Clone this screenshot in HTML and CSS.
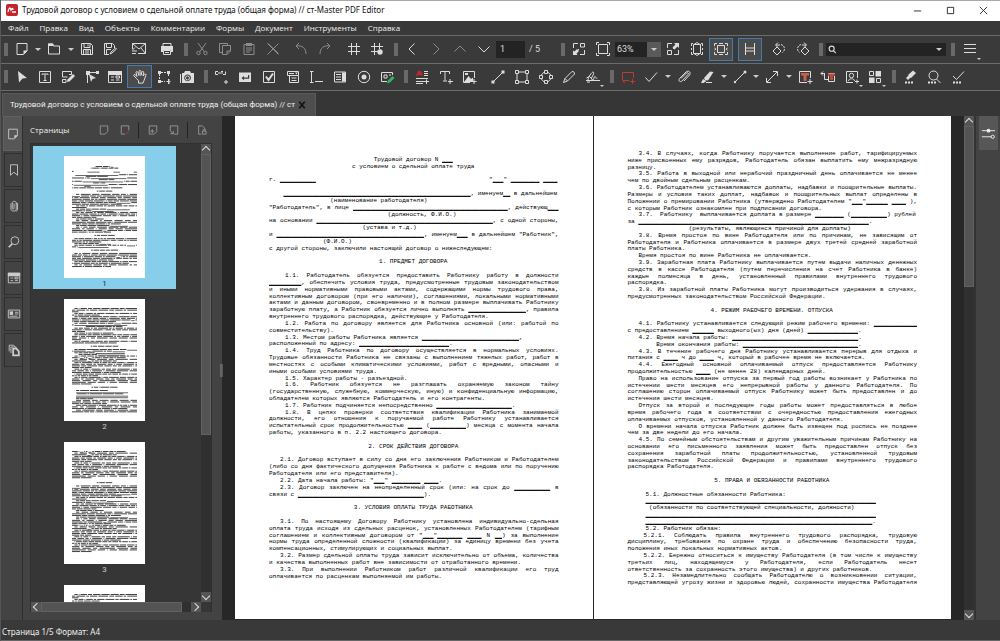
FILE: index.html
```html
<!DOCTYPE html>
<html lang="ru">
<head>
<meta charset="utf-8">
<title>Трудовой договор с условием о сдельной оплате труда (общая форма) // ст-Master PDF Editor</title>
<link rel="stylesheet" href="styles.css">
</head>
<body>
<svg class="sprite" aria-hidden="true">
<symbol id="page" viewBox="0 0 16 16"><path d="M3 2.500h10v7.500l-3.500 3.500H3z" class="w"/><path d="M13 9.500v.5l-3.500 3.500v-4z" class="f"/></symbol>
<symbol id="folder" viewBox="0 0 16 16"><path d="M2.500 13V3h4l1 2h6v8z" class="w"/><path d="M2 2.500h5l1 2.500H2z" class="f"/></symbol>
<symbol id="save" viewBox="0 0 16 16"><path d="M2.500 2.500h9l2 2v9h-11zM5 2.500v4h6v-4M4.500 13.500v-5h7v5M6 10h4M6 12h4M9 3.500v2" class="w"/></symbol>
<symbol id="saveas" viewBox="0 0 16 16"><path d="M7 13.500H2.500v-11h8l2 2V7M4.500 2.500v4h5v-4M4.500 13V8.500H9M8 13l1-2 4.500-4 1 1-4.500 4z" class="w"/></symbol>
<symbol id="mail" viewBox="0 0 16 16"><path d="M1.500 8V2.500h13v10H7M1.500 2.500L8 8l6.500-5.500M14.500 12.500L10 7M1 10h5M1 12.500h4M4 6.500L1.500 9" class="w"/></symbol>
<symbol id="print" viewBox="0 0 16 16"><path d="M4 5V2.500h8V5M4.500 9.500h7v4h-7zM6 11.500h4" class="w"/><path d="M2 5h12v6h-2V9H4v2H2z" class="f"/></symbol>
<symbol id="cut" viewBox="0 0 16 16"><path d="M4 2l6.500 9M12 2L5.500 11" class="w"/><circle cx="4.500" cy="12" r="1.700" class="w"/><circle cx="11.500" cy="12" r="1.700" class="w"/></symbol>
<symbol id="copy" viewBox="0 0 16 16"><path d="M5 11.500H2.500v-9h8V4M5.500 4.500h8V10L10 13.500H5.500zM13.500 10H10v3.500" class="w"/></symbol>
<symbol id="paste" viewBox="0 0 16 16"><path d="M3 3.500h10v10H3zM5 7h6M5 9h6M5 11h4" class="w"/><path d="M5 2h6v3H5z" class="f"/></symbol>
<symbol id="x" viewBox="0 0 16 16"><path d="M2.500 2.500l11 11M13.500 2.500l-11 11" class="w"/><path d="M3 2.500l10.500 10" class="w"/></symbol>
<symbol id="undo" viewBox="0 0 16 16"><path d="M6 2L3 5l3 3M3 5c6-1 10 2 10 8" class="w"/></symbol>
<symbol id="redo" viewBox="0 0 16 16"><path d="M10 2l3 3-3 3M13 5C7 4 3 7 3 13" class="w"/></symbol>
<symbol id="grid" viewBox="0 0 16 16"><path d="M5.500 2v12M10.500 2v12M2 5.500h12M2 10.500h12" class="w"/></symbol>
<symbol id="gridsnap" viewBox="0 0 16 16"><path d="M5.500 2v12M10.500 2v6M2 5.500h12M2 10.500h7" class="w"/><circle cx="11" cy="11" r="2.700" class="f"/></symbol>
<symbol id="left" viewBox="0 0 16 16"><path d="M10.500 2.500L5 8l5.500 5.500" class="w"/></symbol>
<symbol id="right" viewBox="0 0 16 16"><path d="M5.500 2.500L11 8l-5.500 5.500" class="w"/></symbol>
<symbol id="up" viewBox="0 0 16 16"><path d="M2.500 10.500L8 5l5.500 5.500" class="w"/></symbol>
<symbol id="down" viewBox="0 0 16 16"><path d="M2.500 5.500L8 11l5.500-5.500" class="w"/></symbol>
<symbol id="fit1" viewBox="0 0 16 16"><path d="M2.500 7V2.500H7M9.500 2.500h4V6h-4zM9 13.500h4.500V9M8 8l-4 4" class="w"/><path d="M2 14V9.500l1.500 1L6 8l2 2-2.500 2.500 1 1.500z" class="f"/></symbol>
<symbol id="fit2" viewBox="0 0 16 16"><path d="M3.500 3.500h9v9h-9zM1.500 4V1.500H4M12 1.500h2.500V4M1.500 12v2.500H4M12 14.500h2.500V12" class="w"/></symbol>
<symbol id="fit3" viewBox="0 0 16 16"><path d="M7 2.500H2.500V7M2.500 9.500h4v4h-4zM9 13.500h4.500V9M8 8l4-4" class="w"/><path d="M14 2v5l-1.500-1.500L9.500 8.500 7.500 6.500l3-3L9 2z" class="f"/></symbol>
<symbol id="fitp" viewBox="0 0 16 16"><path d="M4.500 3.500h7v9h-7zM5 3.500L8 1.500l3 2M5 12.500l3 2 3-2M2.500 5V2.500H4M12 2.500h1.500V5M2.500 11v2.500H4M12 13.500h1.500V11M2.500 7v2M13.500 7v2" class="w"/></symbol>
<symbol id="fitw" viewBox="0 0 16 16"><path d="M4.500 4.500h7v7h-7zM1.500 5V2.500H4M12 2.500h2.500V5M1.500 11v2.500H4M12 13.500h2.500V11M6 2.500h4M6 13.500h4M1.500 7l1.500 1-1.500 1M14.500 7L13 8l1.500 1" class="w"/></symbol>
<symbol id="facing" viewBox="0 0 16 16"><path d="M3.500 2v12M12.500 2v12M3.500 7h9M3.500 10h9" class="w"/></symbol>
<symbol id="rotl" viewBox="0 0 16 16"><path d="M6 6l4 4-4 4-4-4zM5 4h4M7 1.500L4.500 4 7 6.500" class="w"/><path d="M10 3.500c4 1 4.500 6 1.500 8" class="w d"/></symbol>
<symbol id="rotr" viewBox="0 0 16 16"><path d="M10 6l4 4-4 4-4-4zM11 4H7M9 1.500L11.500 4 9 6.500" class="w"/><path d="M6 3.500c-4 1-4.500 6-1.500 8" class="w d"/></symbol>
<symbol id="more" viewBox="0 0 16 16"><path d="M2 3.500h12M2 7.500h12M2 11.500h12" class="w"/></symbol>
<symbol id="search" viewBox="0 0 16 16"><circle cx="9" cy="6.500" r="4.500" class="w"/><path d="M6 10l-4 4" class="w k"/></symbol>
<symbol id="find" viewBox="0 0 16 16"><circle cx="6.500" cy="6.500" r="4.500" class="w k"/><path d="M9.500 10l4.500 4.500" class="w k"/></symbol>
<symbol id="arrow" viewBox="0 0 16 16"><path d="M4 2l9 7-4.500.5L5 13.500z" class="f"/></symbol>
<symbol id="tbox" viewBox="0 0 16 16"><path d="M2.500 2.500h11v11h-11zM5 6V5h6v1M8 5v6M6.500 11.500h3" class="w"/></symbol>
<symbol id="editf" viewBox="0 0 16 16"><path d="M9 5.500h2.500v-3h-9V6M2.500 2.500V8h5M2.500 10.500H6v3H2.500z" class="w"/><path d="M7 13l.5-2.500L13 5l2 2-5.500 5.500z" class="f"/></symbol>
<symbol id="editp" viewBox="0 0 16 16"><path d="M3.500 14V3.500H14" class="w"/><path d="M2 2h4v4H2zM12 2h3v3h-3zM5 5l7 4-3.500 1L7 13z" class="f"/></symbol>
<symbol id="form" viewBox="0 0 16 16"><path d="M1.500 2.500h13v11h-13zM4 8h3M4 11h3M9 7h3.500v2H9zM9 11h3.500" class="w"/><path d="M1 2h14v4H1z" class="f"/></symbol>
<symbol id="hand" viewBox="0 0 16 16"><path d="M4.500 9.500L2 7c-.8-1 .3-2 1.200-1.200L5 7.500 4 3.500c0-1.200 1.400-1.300 1.800-.2L7 6.500V2.300c0-1.200 1.800-1.200 1.900 0V6.500l1-3.500c.4-1.100 1.900-.7 1.800.4L11 7l1.300-1.700c.7-.9 2-.2 1.600.8l-1.700 5-1.200 3H6.500v-2.500z" class="w"/></symbol>
<symbol id="marq" viewBox="0 0 16 16"><path d="M3.500 5v6M5 3.500h6M12.500 5v3M5 12.500h4M10.500 12.500h4M12.500 10.500v4" class="w d"/><path d="M2 2h3v3H2zM11 2h3v3h-3zM2 11h3v3H2zM12 10h1.500v5H12z" class="f"/></symbol>
<symbol id="cam" viewBox="0 0 16 16"><path fill-rule="evenodd" d="M1 5h1v9H1zM3 4h2l1-2h5l1 2h3v10H3zM8.500 5.500a3.400 3.400 0 1 0 .1 0z" class="f"/><circle cx="8.500" cy="9" r="2" class="w"/></symbol>
<symbol id="link" viewBox="0 0 16 16"><path d="M4 2.500H1.500v3H4M7 2.500h2M4 4h5M9 5.500h2.500v-3M12 11v4M10 13h4" class="w"/></symbol>
<symbol id="btn" viewBox="0 0 16 16"><path fill-rule="evenodd" d="M2 3.500h12v9.500H2zM11 6v2.500H7V7L4.500 9 7 11.300V9.700h5.200V6z" class="f"/></symbol>
<symbol id="chk" viewBox="0 0 16 16"><path d="M2.500 2.500h11v11h-11z" class="w"/><path d="M5 7.500L7.500 11 12 4.500" class="w k"/></symbol>
<symbol id="combo" viewBox="0 0 16 16"><path d="M2.500 2.500h11v4h-11zM4.500 6.500v7h9v-7M6.500 9h5M6.500 11.500h5M4 4.500h5" class="w"/><path d="M10 3.500h3l-1.500 2z" class="f"/></symbol>
<symbol id="tf" viewBox="0 0 16 16"><path d="M2 2.500h3.500M3.500 2.500v11M2 13.500h3.500M7 12.500h8" class="w"/></symbol>
<symbol id="list" viewBox="0 0 16 16"><path d="M2.500 3h11v10h-11zM4 5.500h5M4 8h5M4 10.500h5" class="w"/><path d="M10 3.500h3.500v9H10z" class="f"/></symbol>
<symbol id="card" viewBox="0 0 16 16"><path d="M1.500 3.500h13v9h-13zM9 6h4M9 8h4M3 10.500h9" class="w"/><path d="M3 5h4v4H3z" class="f"/></symbol>
<symbol id="radio" viewBox="0 0 16 16"><circle cx="8" cy="8" r="5.700" class="w"/><circle cx="8" cy="8" r="2.500" class="f"/></symbol>
<symbol id="sign" viewBox="0 0 16 16"><path d="M8 12.500H2.500v-9h11V6M5 6h3v3H5zM10 6h2" class="w"/><path d="M8 14.500l1-3 4.500-4.500 2 2-4.500 4.500z" fill="#35b36a"/></symbol>
<symbol id="edtext" viewBox="0 0 16 16"><path d="M2 7l2-5h3l2 5H7.500L7 6H4l-.5 1z" fill="#c2272d"/><path d="M10 2.500h4M10 4.500h4M10 6.500h4M2 9.500h12M2 12.500h8M2 14.500h7M10 12.500h5M12.500 10.500V15" class="w"/></symbol>
<symbol id="addt" viewBox="0 0 16 16"><path d="M2.500 5V2.500h9V5M7 2.500v9M5 12h4M12 10v5M10 12.500h5" class="w"/></symbol>
<symbol id="img" viewBox="0 0 16 16"><path d="M9 13.500H2.500v-11h11V9M10.500 12.500h5M13 10v5" class="w"/><path d="M3 13L7.500 7l2.500 3 2-1.500V13zM4 4h3v2H4z" class="f"/></symbol>
<symbol id="line" viewBox="0 0 16 16"><path d="M3.500 12.500l9-9" class="w"/><path d="M1.500 11.500h3v3h-3zM11.500 1.500h3v3h-3z" class="f"/></symbol>
<symbol id="rect" viewBox="0 0 16 16"><path d="M3 3h10v10H3z" class="w"/><path d="M1.500 1.500h3v3h-3zM11.500 1.500h3v3h-3zM1.500 11.500h3v3h-3zM11.500 11.500h3v3h-3z" class="n"/></symbol>
<symbol id="circ" viewBox="0 0 16 16"><circle cx="8" cy="8" r="5" class="w"/><path d="M6.500 1.500h3v3h-3zM6.500 11.500h3v3h-3zM1.500 6.500h3v3h-3zM11.500 6.500h3v3h-3z" class="n"/></symbol>
<symbol id="pen" viewBox="0 0 16 16"><path d="M2.500 13.500L4 9.500 11 2.500c2 0 2.500 1 2.500 2.500L6.500 12zM4 9.500L6.500 12" class="w"/></symbol>
<symbol id="ink" viewBox="0 0 16 16"><path d="M1 11.500h14M3 11c0-3 4-8 5-8s1 2-1 5 2 4 2 1 3 0 3 1M1.500 9l3-1.500 3 3M2 13h3" class="w"/></symbol>
<symbol id="cloud" viewBox="0 0 16 16"><path d="M4 11.500H2.500v-8h11V9M4 11v3M4 11.500h5M10 12.500h5M12.500 10v5" stroke="#c03a30" fill="none"/></symbol>
<symbol id="check" viewBox="0 0 16 16"><path d="M2.500 8.500l3.500 4 8-9" class="w"/></symbol>
<symbol id="clip" viewBox="0 0 16 16"><path d="M5 9.500l5.500-5.500c1.200-1 2.500.3 1.500 1.500l-6 6.500c-2 1.700-4-.3-2.500-2.500L10 3c2.500-2.200 5.500.5 3.500 3L8 12" class="w"/></symbol>
<symbol id="hl" viewBox="0 0 16 16"><path d="M5 9l6-6.500L14.500 3 9 11.500 6 11z" class="f"/><path d="M4 10l3.500 2-3 2H2z" class="f"/><path d="M7 13.500h6" class="w"/></symbol>
<symbol id="dline" viewBox="0 0 16 16"><path d="M3 13L13 3" class="w"/><circle cx="3" cy="13" r="1.200" class="f"/><circle cx="13" cy="3" r="1.500" class="f"/></symbol>
<symbol id="darrow" viewBox="0 0 16 16"><path d="M3 13L13 3M9 2.500h4.500V7M2.500 9v4.500H7" class="w"/></symbol>
<symbol id="ort" viewBox="0 0 16 16"><path d="M10 13.500H2.500v-11h11V9M10.500 12.500h5M13 10v5" class="w"/><path d="M4 4h8v2.500H9.500V12h-3V6.500H4z" fill="#c8604a"/></symbol>
<symbol id="callt" viewBox="0 0 16 16"><path d="M1 4.500h4M4.500 4.500v6H8M3 2.500L1 4.500l2 2M8.500 4.500h6v8h-6z" class="w"/><path d="M8 4.500h7V7h-2v4h-3V7H8z" fill="#b84a38"/></symbol>
<symbol id="stamp" viewBox="0 0 16 16"><path d="M9 13.500H2.500v-11h11V9M4.500 12c0-3 6-3 6 0M11 12.500h4M13 10.500v4" class="w"/><circle cx="7.500" cy="6.500" r="2.200" class="w"/></symbol>
<symbol id="tiles" viewBox="0 0 16 16"><path d="M2.500 2.500h4v4h-4zM9.500 9.500h4v4h-4z" class="w"/><path d="M8.500 2h5.500v5.500H8.500zM2 8.500h5.500V14H2z" class="f"/></symbol>
<symbol id="hlred" viewBox="0 0 16 16"><path d="M6 6l5-4.500L14 4l-5 5zM4 9l2.500-2.500 2 2L6 11z" class="f"/><path d="M3 13.500h9" class="w k d"/></symbol>
<symbol id="sred" viewBox="0 0 16 16"><circle cx="7.500" cy="6.500" r="4.500" class="w"/><path d="M10.500 10l4 4" class="w"/><path d="M2 13.500h8" class="w k d"/></symbol>
<symbol id="cred" viewBox="0 0 16 16"><path d="M3 7l3.500 3.500L14 2.500" class="w"/><path d="M3 13.500h8" class="w k d"/></symbol>
<symbol id="bmk" viewBox="0 0 16 16"><path d="M4 2h8v12l-4-3.500L4 14z" class="w"/></symbol>
<symbol id="vclip" viewBox="0 0 16 16"><path d="M8 5v5.500c0 1.300-2 1.300-2 0v-6c0-2.500 4.500-2.500 4.500 0v7c0 3-6 3-6 0V5M10.500 5h1.500v6.500c0 1.500-1 2.500-2 2.500" class="w"/></symbol>
<symbol id="layers" viewBox="0 0 16 16"><path d="M2.500 9.500v-7h5l3 3M4.500 11.500v-7h5l3 3" class="w"/><path d="M7 6.500h3.500l3 3V14H7z" class="w k"/></symbol>
<symbol id="slid" viewBox="0 0 16 16"><path d="M1 5h14M1 11.500h10" class="w"/><circle cx="8" cy="5" r="2" class="f"/><circle cx="12.500" cy="11.500" r="1.700" class="w"/></symbol>
<symbol id="pg" viewBox="0 0 16 16"><path d="M3 2.500h10v7.500l-3.500 3.500H3z" class="w"/></symbol>
<symbol id="pgdel" viewBox="0 0 16 16"><path d="M3 2.500h10v6M8 13.500H3v-11" class="w"/><path d="M9 10l4 4M13 10l-4 4" stroke="#a33a3a"/></symbol>
<symbol id="pgout" viewBox="0 0 16 16"><path d="M3 2.500h10v7.500l-3.500 3.500H3z" class="w"/><path d="M7 7v5M4.500 9.500h5" class="w"/></symbol>
<symbol id="pgin" viewBox="0 0 16 16"><path d="M3 9V2.500h10v11H8M3 9l4 4M7 9v4H3" class="w"/></symbol>
<symbol id="lock" viewBox="0 0 16 16"><path d="M7 13.500H3.500v-11h5l3 3V7M8.500 9.500h5v4h-5zM9.500 9V7.500h3V9" class="w"/></symbol>
</svg>

<div class="app">
<header class="title">
  <svg class="logo" viewBox="0 0 12 12"><rect width="12" height="12" rx="2" fill="#c4262e"/><path d="M2 8c1-5 2-5 3-2 1-2 2-2 2 0M6 8h4" stroke="#fff" stroke-width="1.300" fill="none"/></svg>
  <h1>Трудовой договор с условием о сдельной оплате труда (общая форма) // ст-Master PDF Editor</h1>
  <button aria-label="Свернуть"><svg viewBox="0 0 10 10"><path d="M1 5.500h8"/></svg></button>
  <button aria-label="Развернуть"><svg viewBox="0 0 10 10"><path d="M1.500 1.500h7v7h-7z"/></svg></button>
  <button aria-label="Закрыть"><svg viewBox="0 0 10 10"><path d="M1 1l8 8M9 1L1 9"/></svg></button>
</header>
<nav class="menu">
<button>Файл</button><button>Правка</button><button>Вид</button><button>Объекты</button><button>Комментарии</button><button>Формы</button><button>Документ</button><button>Инструменты</button><button>Справка</button>
</nav>

<div class="bar" role="toolbar">
  <div class="grp g180"><i class="grip"></i>
    <button aria-label="Создать"><svg><use href="#page"/></svg></button><button class="car" aria-label="Ещё"></button>
    <button aria-label="Открыть"><svg><use href="#folder"/></svg></button><button class="car" aria-label="Ещё"></button>
    <button aria-label="Сохранить"><svg><use href="#save"/></svg></button><button aria-label="Сохранить как"><svg><use href="#saveas"/></svg></button><i class="gap"></i>
    <button aria-label="Почта"><svg><use href="#mail"/></svg></button><i class="gap"></i><button aria-label="Печать"><svg><use href="#print"/></svg></button>
  </div>
  <div class="grp g210"><i class="grip"></i>
    <button class="off" aria-label="Вырезать"><svg><use href="#cut"/></svg></button><button class="off" aria-label="Копировать"><svg><use href="#copy"/></svg></button><button class="off" aria-label="Вставить"><svg><use href="#paste"/></svg></button><button class="off" aria-label="Удалить"><svg><use href="#x"/></svg></button><i class="gap"></i>
    <button class="off" aria-label="Отменить"><svg><use href="#undo"/></svg></button><button class="off" aria-label="Повторить"><svg><use href="#redo"/></svg></button><i class="gap"></i>
    <button aria-label="Сетка"><svg><use href="#grid"/></svg></button><button aria-label="Привязка"><svg><use href="#gridsnap"/></svg></button>
  </div>
  <div class="grp g167"><i class="grip"></i>
    <button aria-label="Назад"><svg><use href="#left"/></svg></button><button class="off" aria-label="Вперёд"><svg><use href="#right"/></svg></button><button class="off" aria-label="Предыдущая"><svg><use href="#up"/></svg></button><button aria-label="Следующая"><svg><use href="#down"/></svg></button>
    <input class="num" aria-label="Страница" value="1"><span class="of">/ 5</span>
  </div>
  <div class="grp g258"><i class="grip"></i>
    <button aria-label="Реальный размер"><svg><use href="#fit1"/></svg></button><button aria-label="По размеру"><svg><use href="#fit2"/></svg></button>
    <span class="zoom"><select aria-label="Масштаб"><option>63%</option></select></span>
    <button aria-label="Увеличить"><svg><use href="#fit3"/></svg></button><button aria-label="Страница целиком"><svg><use href="#fitp"/></svg></button><button class="on" aria-label="По ширине"><svg><use href="#fitw"/></svg></button><i class="gap"></i>
    <button class="on" aria-label="Разворот"><svg><use href="#facing"/></svg></button><i class="gap"></i>
    <button aria-label="Повернуть влево"><svg><use href="#rotl"/></svg></button><button aria-label="Повернуть вправо"><svg><use href="#rotr"/></svg></button>
  </div>
  <div class="grp g132"><i class="grip"></i><label class="find"><svg><use href="#find"/></svg><input aria-label="Поиск"><i class="tri"></i></label></div>
  <div class="grp g36"><i class="grip"></i><button class="sub" aria-label="Меню"><svg><use href="#more"/></svg></button></div>
</div>

<div class="bar" role="toolbar">
  <div class="grp g200"><i class="grip"></i>
    <button aria-label="Выбор"><svg><use href="#arrow"/></svg></button><button aria-label="Текст"><svg><use href="#tbox"/></svg></button><button aria-label="Правка форм"><svg><use href="#editf"/></svg></button><button aria-label="Правка контуров"><svg><use href="#editp"/></svg></button><button aria-label="Форма"><svg><use href="#form"/></svg></button><button class="on" aria-label="Рука"><svg><use href="#hand"/></svg></button><button aria-label="Выделение"><svg><use href="#marq"/></svg></button><button aria-label="Снимок"><svg><use href="#cam"/></svg></button>
  </div>
  <div class="grp g200"><i class="grip"></i>
    <button aria-label="Ссылка"><svg><use href="#link"/></svg></button><button aria-label="Кнопка"><svg><use href="#btn"/></svg></button><button aria-label="Флажок"><svg><use href="#chk"/></svg></button><button aria-label="Поле со списком"><svg><use href="#combo"/></svg></button><button aria-label="Поле ввода"><svg><use href="#tf"/></svg></button><button aria-label="Список"><svg><use href="#list"/></svg></button><button aria-label="Переключатель"><svg><use href="#radio"/></svg></button><button aria-label="Подпись"><svg><use href="#sign"/></svg></button>
  </div>
  <div class="grp g206"><i class="grip"></i>
    <button aria-label="Изменить текст"><svg><use href="#edtext"/></svg></button><button aria-label="Добавить текст"><svg><use href="#addt"/></svg></button><button aria-label="Изображение"><svg><use href="#img"/></svg></button><i class="gap"></i>
    <button aria-label="Линия"><svg><use href="#line"/></svg></button><button aria-label="Прямоугольник"><svg><use href="#rect"/></svg></button><button aria-label="Эллипс"><svg><use href="#circ"/></svg></button><button aria-label="Карандаш"><svg><use href="#pen"/></svg></button><button class="sub" aria-label="Рукопись"><svg><use href="#ink"/></svg></button>
  </div>
  <div class="grp g282"><i class="grip"></i>
    <button aria-label="Заметка"><svg><use href="#cloud"/></svg></button><button aria-label="Отметка"><svg><use href="#check"/></svg></button><button class="car" aria-label="Ещё"></button>
    <button aria-label="Вложение"><svg><use href="#clip"/></svg></button><button aria-label="Маркер"><svg><use href="#hl"/></svg></button><button class="car" aria-label="Ещё"></button>
    <button aria-label="Отрезок"><svg><use href="#dline"/></svg></button><button class="car" aria-label="Ещё"></button>
    <button aria-label="Стрелка"><svg><use href="#darrow"/></svg></button><button class="car" aria-label="Ещё"></button>
    <button aria-label="Надпись"><svg><use href="#ort"/></svg></button><button aria-label="Выноска"><svg><use href="#callt"/></svg></button><button class="sub" aria-label="Штамп"><svg><use href="#stamp"/></svg></button><button class="sub" aria-label="Измерения"><svg><use href="#tiles"/></svg></button>
  </div>
  <div class="grp g83"><i class="grip"></i>
    <button aria-label="Скрыть"><svg><use href="#hlred"/></svg></button><button aria-label="Найти и скрыть"><svg><use href="#sred"/></svg></button><button aria-label="Применить"><svg><use href="#cred"/></svg></button>
  </div>
</div>

<div class="tabs"><div class="tab"><span>Трудовой договор с условием о сдельной оплате труда (общая форма) // ст</span><button aria-label="Закрыть вкладку"><svg viewBox="0 0 10 10"><path d="M1.500 1l7 8M8.500 1l-7 8"/></svg></button></div></div>

<main>
<nav class="rail">
  <button class="sel" aria-label="Страницы"><svg><use href="#page"/></svg></button><button aria-label="Закладки"><svg><use href="#bmk"/></svg></button><button aria-label="Вложения"><svg><use href="#vclip"/></svg></button><button aria-label="Поиск"><svg><use href="#search"/></svg></button><button aria-label="Поля"><svg><use href="#form"/></svg></button><button aria-label="Подписи"><svg><use href="#card"/></svg></button><button aria-label="Слои"><svg><use href="#layers"/></svg></button>
</nav>
<aside class="side">
  <div class="head"><h2>Страницы</h2>
    <button aria-label="Вставить страницу"><svg><use href="#pg"/></svg></button><button aria-label="Удалить страницу"><svg><use href="#pgdel"/></svg></button><i class="sep"></i><button aria-label="Извлечь"><svg><use href="#pgout"/></svg></button><button aria-label="Заменить"><svg><use href="#pgin"/></svg></button><i class="sep"></i><button aria-label="Защита"><svg><use href="#lock"/></svg></button>
  </div>
  <div class="box">
    <div class="thumbs">
      <figure class="cur"><svg data-page="1"></svg><figcaption>1</figcaption></figure>
      <figure><svg data-page="2"></svg><figcaption>2</figcaption></figure>
      <figure><svg data-page="3"></svg><figcaption>3</figcaption></figure>
      <figure><svg data-page="4"></svg></figure>
    </div>
    <div class="vs"><b class="u"></b><div class="th t62"></div><div class="tr"></div><b class="dn"></b></div>
    <div class="hs"><b class="lf"></b><div class="th"></div><div class="tr"></div><b class="rt"></b></div>
  </div>
</aside>
<i class="split"></i>
<div class="view">
<article class="sheet one">
<p class="c">Трудовой договор N ___</p>
<p class="c">с условием о сдельной оплате труда</p>
<p></p>
<p class="ends"><span>г. __________</span><span>"___" ________ ____</span></p>
<p></p>
<p>    ____________________________________________________, именуем__ в дальнейшем</p>
<p>                 (наименование работодателя)</p>
<p class="j">"Работодатель", в лице ___________________________________________, действующ___</p>
<p>                                 (должность, Ф.И.О.)</p>
<p class="j">на основании _________________________________________________, с одной стороны,</p>
<p>                          (устава и т.д.)</p>
<p class="j">и _________________________________________, именуем___ в дальнейшем "Работник",</p>
<p>               (Ф.И.О.)</p>
<p>с другой стороны, заключили настоящий договор о нижеследующем:</p>
<p></p>
<p class="c">1. ПРЕДМЕТ ДОГОВОРА</p>
<p></p>
<p class="j i4">1.1. Работодатель обязуется предоставить Работнику работу в должности</p>
<p class="j">_________, обеспечить условия труда, предусмотренные трудовым законодательством</p>
<p class="j">и иными нормативными правовыми актами, содержащими нормы трудового права,</p>
<p class="j">коллективным договором (при его наличии), соглашениями, локальными нормативными</p>
<p class="j">актами и данным договором, своевременно и в полном размере выплачивать Работнику</p>
<p class="j">заработную плату, а Работник обязуется лично выполнять ________________, правила</p>
<p>внутреннего трудового распорядка, действующие у Работодателя.</p>
<p class="j i4">1.2. Работа по договору является для Работника основной (или: работой по</p>
<p>совместительству).</p>
<p class="i4">1.3. Местом работы Работника является ___________________________,</p>
<p>расположенный по адресу: _________________________.</p>
<p class="j i4">1.4. Труд Работника по договору осуществляется в нормальных условиях.</p>
<p class="j">Трудовые обязанности Работника не связаны с выполнением тяжелых работ, работ в</p>
<p class="j">местностях с особыми климатическими условиями, работ с вредными, опасными и</p>
<p>иными особыми условиями труда.</p>
<p class="i4">1.5. Характер работы - разъездной.</p>
<p class="j i4">1.6. Работник обязуется не разглашать охраняемую законом тайну</p>
<p class="j">(государственную, служебную, коммерческую, иную) и конфиденциальную информацию,</p>
<p>обладателем которых являются Работодатель и его контрагенты.</p>
<p class="i4">1.7. Работник подчиняется непосредственно _____________________.</p>
<p class="j i4">1.8. В целях проверки соответствия квалификации Работника занимаемой</p>
<p class="j">должности, его отношения к поручаемой работе Работнику устанавливается</p>
<p class="j">испытательный срок продолжительностью ____ (__________) месяца с момента начала</p>
<p>работы, указанного в п. 2.2 настоящего договора.</p>
<p></p>
<p class="c">2. СРОК ДЕЙСТВИЯ ДОГОВОРА</p>
<p></p>
<p class="j i3">2.1. Договор вступает в силу со дня его заключения Работником и Работодателем</p>
<p class="j">(либо со дня фактического допущения Работника к работе с ведома или по поручению</p>
<p>Работодателя или его представителя).</p>
<p class="i3">2.2. Дата начала работы: "___" ________ ____.</p>
<p class="j i3">2.3. Договор заключен на неопределенный срок (или: на срок до __________ в</p>
<p>связи с ___________________________________).</p>
<p></p>
<p class="c">3. УСЛОВИЯ ОПЛАТЫ ТРУДА РАБОТНИКА</p>
<p></p>
<p class="j i3">3.1. По настоящему Договору Работнику установлена индивидуально-сдельная</p>
<p class="j">оплата труда исходя из сдельных расценок, установленных Работодателем (тарифным</p>
<p class="j">соглашением и коллективным договором от "___"_______ ____ N __) за выполнение</p>
<p class="j">нормы труда определенной сложности (квалификации) за единицу времени без учета</p>
<p>компенсационных, стимулирующих и социальных выплат.</p>
<p class="j i3">3.2. Размер сдельной оплаты труда зависит исключительно от объема, количества</p>
<p>и качества выполненных работ вне зависимости от отработанного времени.</p>
<p class="j i3">3.3. При выполнении Работником работ различной квалификации его труд</p>
<p>оплачивается по расценкам выполняемой им работы.</p>
</article>
<article class="sheet two">
<p class="j i3">3.4. В случаях, когда Работнику поручается выполнение работ, тарифицируемых</p>
<p class="j">ниже присвоенных ему разрядов, Работодатель обязан выплатить ему межразрядную</p>
<p>разницу.</p>
<p class="j i3">3.5. Работа в выходной или нерабочий праздничный день оплачивается не менее</p>
<p>чем по двойным сдельным расценкам.</p>
<p class="j i3">3.6. Работодателем устанавливаются доплаты, надбавки и поощрительные выплаты.</p>
<p class="j">Размеры и условия таких доплат, надбавок и поощрительных выплат определены в</p>
<p class="j">Положении о премировании Работника (утверждено Работодателем "___"______ ____ ),</p>
<p>с которым Работник ознакомлен при подписании договора.</p>
<p class="i3">3.7.  Работнику  выплачивается доплата в размере ________ (__________) рублей</p>
<p>за ________________________________________________________________.</p>
<p>                 (результаты, являющиеся причиной для доплаты)</p>
<p class="j i3">3.8. Время простоя по вине Работодателя или по причинам, не зависящим от</p>
<p class="j">Работодателя и Работника оплачивается в размере двух третей средней заработной</p>
<p>платы Работника.</p>
<p class="i3">Время простоя по вине Работника не оплачивается.</p>
<p class="j i3">3.9. Заработная плата Работнику выплачивается путем выдачи наличных денежных</p>
<p class="j">средств в кассе Работодателя (путем перечисления на счет Работника в банке)</p>
<p class="j">каждые полмесяца в день, установленный правилами внутреннего трудового</p>
<p>распорядка.</p>
<p class="j i3">3.8. Из заработной платы Работника могут производиться удержания в случаях,</p>
<p>предусмотренных законодательством Российской Федерации.</p>
<p></p>
<p class="c">4. РЕЖИМ РАБОЧЕГО ВРЕМЕНИ. ОТПУСКА</p>
<p></p>
<p class="j i3">4.1. Работнику устанавливается следующий режим рабочего времени: ____________</p>
<p>с предоставлением ______ выходного(ых) дня (дней) ______________.</p>
<p class="i3">4.2. Время начала работы: ___________________________________.</p>
<p>        Время окончания работы: ________________________________.</p>
<p class="j i3">4.3. В течение рабочего дня Работнику устанавливается перерыв для отдыха и</p>
<p>питания с ____ ч до ____ ч, который в рабочее время не включается.</p>
<p class="j i3">4.4. Ежегодный основной оплачиваемый отпуск предоставляется Работнику</p>
<p>продолжительностью ____ (не менее 28) календарных дней.</p>
<p class="j i3">Право на использование отпуска за первый год работы возникает у Работника по</p>
<p class="j">истечении шести месяцев его непрерывной работы у данного Работодателя. По</p>
<p class="j">соглашению сторон оплачиваемый отпуск Работнику может быть предоставлен и до</p>
<p>истечения шести месяцев.</p>
<p class="j i3">Отпуск за второй и последующие годы работы может предоставляться в любое</p>
<p class="j">время рабочего года в соответствии с очередностью предоставления ежегодных</p>
<p>оплачиваемых отпусков, установленной у данного Работодателя.</p>
<p class="j i3">О времени начала отпуска Работник должен быть извещен под роспись не позднее</p>
<p>чем за две недели до его начала.</p>
<p class="j i3">4.5. По семейным обстоятельствам и другим уважительным причинам Работнику на</p>
<p class="j">основании его письменного заявления может быть предоставлен отпуск без</p>
<p class="j">сохранения заработной платы продолжительностью, установленной трудовым</p>
<p class="j">законодательством Российской Федерации и правилами внутреннего трудового</p>
<p>распорядка Работодателя.</p>
<p></p>
<p class="c">5. ПРАВА И ОБЯЗАННОСТИ РАБОТНИКА</p>
<p></p>
<p>     5.1. Должностные обязанности Работника:</p>
<p>     ________________________________________________________________</p>
<p>      (обязанности по соответствующей специальности, должности)</p>
<p>     ________________________________________________________________</p>
<p>     _______________________________________________________________.</p>
<p>     5.2. Работник обязан:</p>
<p class="j i4">5.2.1. Соблюдать правила внутреннего трудового распорядка, трудовую</p>
<p class="j">дисциплину, требования по охране труда и обеспечению безопасности труда,</p>
<p>положения иных локальных нормативных актов.</p>
<p class="j i4">5.2.2. Бережно относиться к имуществу Работодателя (в том числе к имуществу</p>
<p class="j">третьих лиц, находящемуся у Работодателя, если Работодатель несет</p>
<p>ответственность за сохранность этого имущества) и других работников.</p>
<p class="j i4">5.2.3. Незамедлительно сообщать Работодателю о возникновении ситуации,</p>
<p class="j">представляющей угрозу жизни и здоровью людей, сохранности имущества Работодателя</p>
</article>
</div>
<div class="vs big"><b class="u"></b><div class="th t32"></div><div class="tr"></div><b class="dn"></b></div>
<aside class="props"><button aria-label="Свойства"><svg><use href="#slid"/></svg></button></aside>
</main>
<footer>Страница 1/5 Формат: A4</footer>
</div>
<script src="thumbs.js"></script>
</body>
</html>
```
FILE: thumbs.js
```js
// Draws the page previews: one bar for every word of a page's lines.
const NS = "http://www.w3.org/2000/svg";
const lines = sel => [...document.querySelectorAll(sel + " p")].map(p => ({
  text: p.textContent, just: p.classList.contains("j") || p.classList.contains("ends"),
  center: p.classList.contains("c"),
  indent: p.classList.contains("i4") ? 5 : p.classList.contains("i3") ? 3 : 0
}));
const one = lines(".one"), two = lines(".two");
const sources = { 1: one, 2: two, 3: two.slice(30, 48).concat(one.slice(14, 41), two.slice(30, 48)), 4: two };

document.querySelectorAll("svg[data-page]").forEach(svg => {
  const n = svg.dataset.page, src = sources[n];
  svg.setAttribute("viewBox", "0 0 81 122");
  const top = n === "1" ? 10 : 9;
  src.forEach((line, row) => {
    const words = [...line.text.matchAll(/\S+/g)];
    if (!words.length) return;
    const free = 80 - line.indent - line.text.length;
    const extra = line.just && words.length > 1 ? Math.max(0, free) / (words.length - 1) : 0;
    const start = line.center ? free / 2 : line.indent;
    words.forEach((m, k) => {
      const rule = m[0].startsWith("___");
      const r = document.createElementNS(NS, "rect");
      r.setAttribute("x", 8 + (start + m.index + k * extra) * 65 / 80);
      r.setAttribute("y", top + row * 1.64 + (rule ? .8 : 0));
      r.setAttribute("width", m[0].length * 65 / 80);
      r.setAttribute("height", rule ? .8 : 1);
      r.setAttribute("class", "word");
      svg.append(r);
    });
  });
});

// Blank fields to fill in get a solid rule.
document.querySelectorAll(".sheet p").forEach(p => {
  p.innerHTML = p.innerHTML.replace(/_{2,}/g, "<b>$&</b>");
});
```
FILE: styles.css
```css
* { box-sizing: border-box; }
body { margin: 0; font: 9px/12px Roboto, "Open Sans", sans-serif; color: #eee; background: #393939; }
button { margin: 0; padding: 0; border: 0; background: none; color: inherit; font: inherit; display: flex; align-items: center; justify-content: center; }
h1, h2, p, figure { margin: 0; font: inherit; }
.sprite { position: absolute; width: 0; height: 0; }
.w { fill: none; stroke: currentColor; stroke-width: 1; }
.k { stroke-width: 2; }
.d { stroke-dasharray: 2 1; }
.f { fill: currentColor; }
.n { fill: #393939; stroke: currentColor; }
svg { width: 16px; height: 16px; flex: none; display: block; }

.app { height: 100vh; min-height: 641px; display: flex; flex-direction: column; border-left: 1px solid #555; }
.title { height: 21px; flex: none; display: flex; align-items: center; background: #fff; color: #111; border-top: 1px solid #aaa; padding: 0 0 2px 5px; }
.title h1 { flex: 1; padding-left: 4px; white-space: nowrap; font: 8px/12px "Noto Sans", "Open Sans", sans-serif; }
.title .logo { width: 12px; height: 12px; }
.title button { width: 33px; }
.title button svg { width: 9px; height: 9px; fill: none; stroke: #222; }
.menu { height: 15px; flex: none; display: flex; gap: 11px; padding: 0 7px; border-bottom: 1px solid #6c6c6c; font: 8px/12px "Open Sans", "Noto Sans", sans-serif; }

.bar { height: 28px; flex: none; display: flex; padding: 0 0 1px 3px; border-bottom: 1px solid #6c6c6c; background: #3a3a3a; color: #ddd; }
.bar + .bar { height: 27px; }
.grp { display: flex; align-items: center; padding-right: 5px; flex: none; }
.grp > button { flex: 1; height: 23px; position: relative; }
.grp > button.car { flex: none; width: 9px; }
.car::after, .tri, .zoom::after { content: ""; border: 3px solid transparent; border-top-color: #ccc; border-bottom: 0; }
.sub::after { content: ""; position: absolute; right: 1px; bottom: 1px; border: 2px solid transparent; border-top-color: #ccc; border-bottom: 0; }
.grp > button.on { border: 1px solid #3f7cb4; background: #4b4b4b; }
.grp > button.off { color: #8c8c8c; }
.grip { width: 6px; height: 13px; flex: none; background: radial-gradient(circle, #999 40%, transparent 60%) 0 0 / 2px 2px; background-clip: content-box; padding: 0 2px 0 0; }
.gap { width: 5px; flex: none; }
.g180 { width: 180px; } .g200 { width: 200px; } .g206 { width: 206px; } .g210 { width: 210px; } .g167 { width: 167px; }
.g258 { width: 258px; } .g132 { width: 132px; } .g36 { width: 36px; } .g282 { width: 282px; } .g83 { width: 83px; }
.g167 > button, .g258 > button { flex: none; width: 24px; }
input, select { font: inherit; color: inherit; background: #232323; border: 0; margin: 0; padding: 0; outline: 0; border-radius: 0; }
.num { width: 29px; height: 17px; padding-left: 4px; }
.of { padding-left: 4px; }
.zoom { width: 46px; height: 15px; display: flex; align-items: center; background: #232323; position: relative; }
.zoom select { appearance: none; width: 46px; height: 15px; padding-left: 2px; background: linear-gradient(90deg, #232323 32px, #5a5a5a 32px); }
.zoom::after { position: absolute; right: 4px; top: 6px; }
.find { display: flex; align-items: center; flex: 1; min-width: 0; height: 13px; background: #232323; margin-left: 1px; padding: 0 4px 0 2px; }
.find svg { width: 9px; height: 9px; }
.find input { flex: 1; min-width: 0; height: 11px; }

.tabs { height: 25px; flex: none; display: flex; align-items: flex-end; padding-left: 1px; background: #363636; }
.tab { height: 23px; display: flex; align-items: center; gap: 3px; padding: 0 9px 0 7px; background: #4e4e4e; border: 1px solid #5a5a5a; border-bottom: 0; white-space: nowrap; font-size: 8px; }
.tab svg { width: 8px; height: 8px; stroke: #111; stroke-width: 2; }

main { flex: 1; min-height: 0; display: flex; background: #272727; }
.rail { width: 22px; flex: none; background: #434343; display: flex; flex-direction: column; padding: 0 0 0 3px; gap: 2px; border-right: 1px solid #2e2e2e; color: #ccc; }
.rail button { height: 34px; border: 1px solid #303030; border-right: 0; }
.rail .sel { height: 35px; background: #575757; border-color: #606060; margin-left: -1px; }
.rail svg { width: 14px; height: 14px; }
.side { width: 199px; flex: none; background: #434343; padding: 0 10px 8px 7px; display: flex; flex-direction: column; }
.head { height: 27px; display: flex; align-items: center; color: #aaa; }
.head h2 { color: #eee; flex: 1; font: 8px/12px "Open Sans", "Noto Sans", sans-serif; }
.head button { width: 21px; }
.head svg { width: 12px; height: 12px; }
.sep { width: 1px; height: 16px; background: #222; margin: 0 3px; }
.box { flex: 1; min-height: 0; display: grid; grid-template: minmax(0, 1fr) 10px / minmax(0, 1fr) 10px; background: #363636; border: 1px solid #303030; border-bottom: 0; }
.thumbs { overflow: hidden; padding: 2px; }
figure { width: 143px; height: 143px; padding-top: 10px; display: flex; flex-direction: column; align-items: center; font-size: 8px; line-height: 11px; color: #ccc; }
figure svg { width: 81px; height: 122px; background: #fff; }
.cur { background: #87ceeb; color: #234; }
.word { fill: #444; }
.vs, .hs { display: flex; background: #303030; }
.vs { flex-direction: column; width: 10px; }
.vs b, .hs b { width: 10px; height: 10px; flex: none; background: #555; display: flex; align-items: center; justify-content: center; }
.vs b::after, .hs b::after { content: ""; width: 5px; height: 5px; border: solid #ddd; border-width: 1px 0 0 1px; }
.u::after { transform: translateY(1px) rotate(45deg); }
.rt::after { transform: translateX(-1px) rotate(135deg); }
.dn::after { transform: translateY(-1px) rotate(225deg); }
.lf::after { transform: translateX(1px) rotate(315deg); }
.th { background: #545454; border: 1px solid #626262; }
.t62 { flex: 64; } .t62 + .tr { flex: 36; }
.t32 { flex: 33; } .t32 + .tr { flex: 67; }
.hs .th { flex: 142; } .hs .tr { flex: 9; }
.split { width: 3px; height: 13px; align-self: center; margin: 5px 10px 0 -2px; background: radial-gradient(circle, #888 40%, transparent 60%) 0 0 / 2px 2px; }
.view { flex: 1; min-width: 0; display: flex; gap: 1px; padding: 0 13px 1px 2px; }
.sheet { flex: 1; min-width: 0; background: #fff; color: #000; padding: 41px 35px 39px 34px; display: flex; flex-direction: column; justify-content: space-between; font: 6px/6px "Liberation Mono", "Courier New", monospace; }
.sheet.two { padding: 35px 35px 32px 34px; }
.sheet p { height: 6px; white-space: pre; }
.sheet b { font-weight: inherit; text-decoration: underline 1px #111; text-underline-offset: 1px; text-decoration-skip-ink: none; }
.sheet .j { white-space: normal; text-align-last: justify; margin-right: -1px; }
.sheet .c { text-align: center; }
.sheet .ends { display: flex; justify-content: space-between; }
.i4 { text-indent: 16px; }
.i3 { text-indent: 11px; }
.props { width: 26px; flex: none; background: #434343; border-left: 2px solid #333; padding: 0 3px 0 3px; }
.props button { width: 19px; height: 34px; background: #575757; }
.props svg { width: 15px; height: 15px; }
footer { height: 21px; flex: none; display: flex; align-items: center; padding: 4px 1px 0; border-bottom: 1px solid #666; font: 8px/12px "Noto Sans", "Open Sans", sans-serif; }
```
